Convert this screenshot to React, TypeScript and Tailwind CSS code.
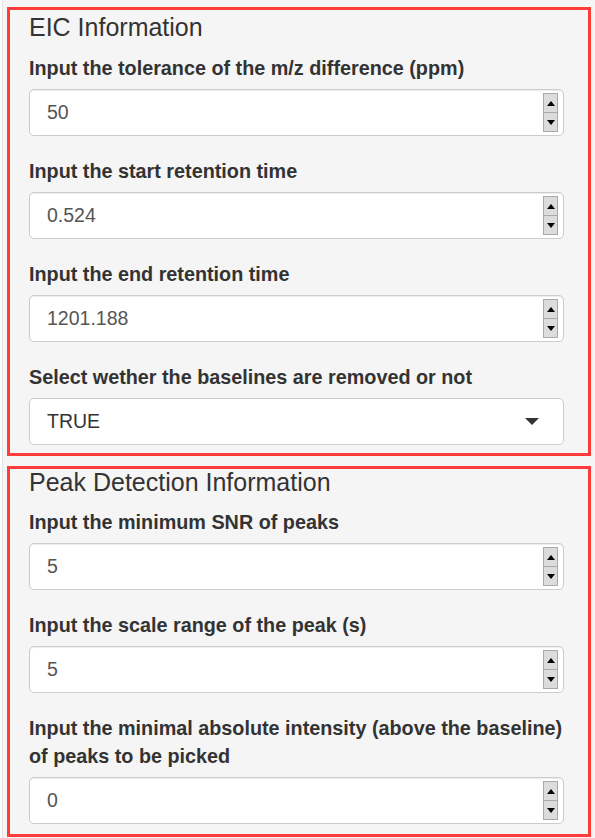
import { useState } from 'react';

const FONT = { fontFamily: '"Liberation Sans", Arial, sans-serif' };

function NumField({ label, value }: { label: React.ReactNode; value: string }) {
  const [v, setV] = useState(value);
  return (
    <div className="mt-[21px]">
      <label className="block whitespace-nowrap text-[19.8px] font-bold leading-[28px] text-[#333]">{label}</label>
      <div className="relative mt-[7px] h-[47px] rounded-[5px] border border-[#ccc] bg-white shadow-[inset_0_1px_1px_rgba(0,0,0,0.075)]">
        <input
          value={v}
          onChange={(e) => setV(e.target.value)}
          className="h-full w-full bg-transparent pl-[17px] text-[19.5px] text-[#555] outline-none"
        />
        <div className="absolute right-[5px] top-[3px] flex h-[39px] w-[15px] flex-col border border-[#a9a9a9] bg-[#dcdcdc]">
          <div className="flex flex-1 items-center justify-center border-b border-[#a9a9a9]">
            <span className="h-0 w-0 border-x-[4px] border-b-[5px] border-x-transparent border-b-black" />
          </div>
          <div className="flex flex-1 items-center justify-center">
            <span className="h-0 w-0 border-x-[4px] border-t-[5px] border-x-transparent border-t-black" />
          </div>
        </div>
      </div>
    </div>
  );
}

function SelectField({ label, value }: { label: string; value: string }) {
  return (
    <div className="mt-[21px]">
      <label className="block whitespace-nowrap text-[19.8px] font-bold leading-[28px] text-[#333]">{label}</label>
      <div className="mt-[7px] flex h-[47px] items-center justify-between rounded-[5px] border border-[#ccc] bg-white pl-[17px] pr-[24px]">
        <span className="text-[19.5px] text-[#333]">{value}</span>
        <span className="h-0 w-0 border-x-[7px] border-t-[7px] border-x-transparent border-t-[#333]" />
      </div>
    </div>
  );
}

export default function App() {
  return (
    <div className="min-h-[838px] w-[595px] bg-white pl-[2px]" style={FONT}>
      <div className="min-h-[838px] border-l border-[#e3e3e3] bg-[#f5f5f5] pl-[4px] pr-[4px] pt-[7px]">
        <section className="h-[449px] border-[3px] border-[#ff3b3b] pl-[19px] pr-[24px]">
          <h4 className="pt-[2px] text-[25px] leading-[30px] text-[#333]">EIC Information</h4>
          <div className="-mt-[9px]">
            <NumField label="Input the tolerance of the m/z difference (ppm)" value="50" />
            <NumField label="Input the start retention time" value="0.524" />
            <NumField label="Input the end retention time" value="1201.188" />
            <SelectField label="Select wether the baselines are removed or not" value="TRUE" />
          </div>
        </section>
        <section className="mt-[10px] h-[371px] border-[3px] border-[#ff3b3b] pl-[19px] pr-[24px]">
          <h4 className="text-[25px] leading-[26px] text-[#333]">Peak Detection Information</h4>
          <div className="-mt-[8px]">
            <NumField label="Input the minimum SNR of peaks" value="5" />
            <NumField label="Input the scale range of the peak (s)" value="5" />
            <NumField
              label={
                <>
                  Input the minimal absolute intensity (above the baseline)
                  <br />
                  of peaks to be picked
                </>
              }
              value="0"
            />
          </div>
        </section>
      </div>
    </div>
  );
}
